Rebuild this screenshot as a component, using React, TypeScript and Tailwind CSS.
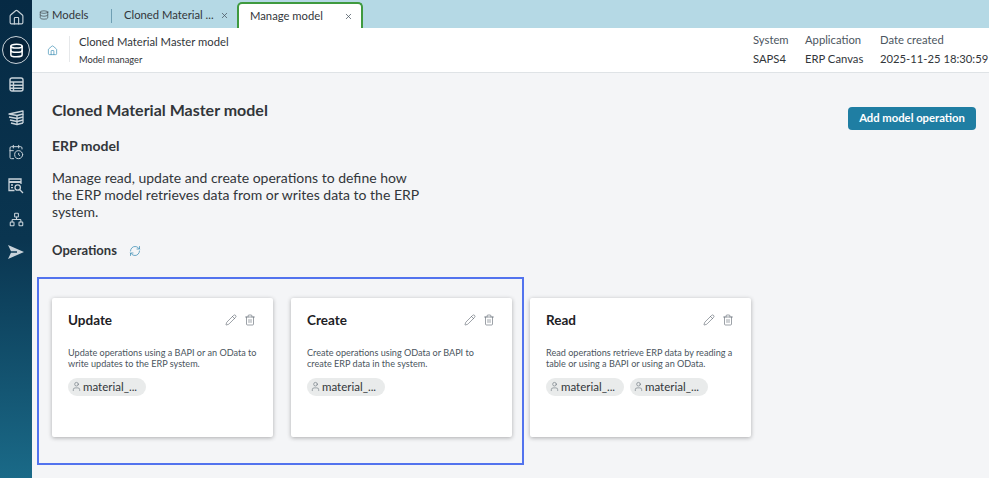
import { Home, Database, X, Pencil, Trash2, User, RefreshCw, Network, CalendarClock } from "lucide-react";

function Chip() {
  return (
    <span className="flex items-center h-[18px] w-[78px] rounded-full bg-[#e9ebeb] pl-[3px] text-[11.5px] text-[#32363a]">
      <User size={11} strokeWidth={1.2} className="text-[#5c6670] mr-[1px] shrink-0" />
      <span>material_...</span>
    </span>
  );
}

function Card({ title, lines, chips }: { title: string; lines: string[]; chips: number }) {
  return (
    <div className="w-[221px] h-[139px] shrink-0 bg-white rounded-[2px] shadow-[0_1px_4px_rgba(0,0,0,0.3)] pl-4 pr-[17px] pt-[12px]">
      <div className="flex items-center justify-between h-[20px]">
        <span className="text-[13.5px] font-bold text-[#1d2125]">{title}</span>
        <span className="flex items-center gap-[7px] text-[#4b5560]">
          <Pencil size={12} strokeWidth={1.1} />
          <Trash2 size={12} strokeWidth={1.1} />
        </span>
      </div>
      <div className="mt-[17px] text-[9.1px] leading-[11.5px] text-[#4b5560] whitespace-nowrap">
        {lines.map((l) => (
          <div key={l}>{l}</div>
        ))}
      </div>
      <div className="flex gap-[6px] mt-[8px]">
        {Array.from({ length: chips }).map((_, i) => (
          <Chip key={i} />
        ))}
      </div>
    </div>
  );
}

function RailIcons() {
  return (
    <div className="flex flex-col items-center text-[#c9d3da]">
      <div className="h-[36px] flex items-center justify-center -mt-[1px]">
        <Home size={17} strokeWidth={1.6} />
      </div>
      <div className="w-[28px] h-[28px] rounded-full border border-[#c9d3da] flex items-center justify-center bg-[#06233a] text-white mt-[1px]">
        <Database size={15} strokeWidth={2.4} />
      </div>
      <div className="flex flex-col items-center gap-[18px] mt-[13px]">
        <svg width="15" height="15" viewBox="0 0 15 15" fill="none" stroke="currentColor" strokeWidth="1.4">
          <rect x="1" y="1" width="13" height="13" rx="2" />
          <path d="M1 5h13M1 8.2h13M1 11.2h13M4.5 5v9" />
        </svg>
        <svg width="17" height="16" viewBox="0 0 17 16" fill="none" stroke="currentColor" strokeWidth="1.3" strokeLinejoin="round">
          <path d="M1 4 L15 1 V4 L9 5.5 L1 4 Z" />
          <path d="M1 7 L9 8.5 L15 7 M2 10 L9 11.5 L15 10 M3 13 L9 14.5 L15 13" />
          <path d="M9 5.5 V14.5 M15 4 V13" />
        </svg>
        <CalendarClock size={16} strokeWidth={1.5} />
        <svg width="16" height="16" viewBox="0 0 16 16" fill="none" stroke="currentColor" strokeWidth="1.3">
          <path d="M6.5 12.5 H1 V1 H13 V6" />
          <path d="M1 4 H13" strokeWidth="2" />
          <path d="M3 7 H5 M3 9.7 H5" />
          <circle cx="9.7" cy="9.5" r="2.7" />
          <path d="M11.6 11.5 L15 15" />
        </svg>
        <Network size={15} strokeWidth={1.7} />
        <svg width="16" height="14" viewBox="0 0 16 14" fill="currentColor">
          <path d="M0 0 L16 7 L0 14 L3 7.8 H9 V6.2 H3 Z" />
        </svg>
      </div>
    </div>
  );
}

export default function App() {
  return (
    <div className="relative flex w-[989px] h-[478px] overflow-hidden bg-[#f4f5f7] font-['Lato',sans-serif] text-[#32363a]">
      <aside className="w-[32px] shrink-0 bg-gradient-to-b from-[#062a44] via-[#0a3550] to-[#1a6a88]">
        <RailIcons />
      </aside>
      <div className="flex-1 flex flex-col min-w-0">
        <div className="h-[28px] bg-[#b5d9e5] flex items-end text-[11.25px] text-[#32363a] shrink-0">
          <div className="flex items-center h-[28px] pt-[2px] pl-[7px] w-[79px]">
            <Database size={10} strokeWidth={1.5} className="mr-[3px]" />
            <span>Models</span>
          </div>
          <div className="w-px h-[14px] bg-[#6f9fb3] mb-[5px]" />
          <div className="flex items-center h-[28px] pt-[2px] pl-[12px] w-[125px]">
            <span>Cloned Material ...</span>
            <X size={9} className="ml-[6px] text-[#4a5560]" />
          </div>
          <div className="flex items-center justify-between w-[126px] h-[26px] pl-[11px] pr-[8px] bg-white border-2 border-b-0 border-[#3f9a3f] rounded-t-[5px]">
            <span>Manage model</span>
            <X size={9} className="text-[#4a5560]" />
          </div>
        </div>
        <header className="h-[45px] shrink-0 bg-white border-b border-[#dfe3e6] flex items-center">
          <div className="w-[37px] flex justify-end pr-[11px]">
            <Home size={11} strokeWidth={1.5} className="text-[#3d8fb5]" />
          </div>
          <div className="border-l border-[#e6e8ea] h-[26px] pl-[9px] flex flex-col -mt-[2px]">
            <span className="text-[11.25px] leading-[14px] -mt-[1px] text-[#32363a]">Cloned Material Master model</span>
            <span className="text-[9.25px] leading-[12px] mt-[5px] text-[#32363a]">Model manager</span>
          </div>
          <div className="ml-auto flex gap-[17px] text-[11.25px] leading-[14px] text-[#4b5560] whitespace-nowrap -mt-[1px]">
            <div className="flex flex-col gap-[5px] w-[35px]"><span>System</span><span className="text-[#32363a]">SAPS4</span></div>
            <div className="flex flex-col gap-[5px] w-[58px]"><span>Application</span><span className="text-[#32363a]">ERP Canvas</span></div>
            <div className="flex flex-col gap-[5px] w-[109px]"><span>Date created</span><span className="text-[#32363a]">2025-11-25 18:30:59</span></div>
          </div>
        </header>
        <main className="flex-1 pl-[20px] pr-[13px] pt-[26px] relative">
          <div className="flex justify-between items-start">
            <h1 className="text-[16px] leading-[22px] font-bold text-[#32363a]">Cloned Material Master model</h1>
            <button className="h-[23px] w-[128px] mt-[8px] rounded-[4px] bg-[#1f7ea3] text-white text-[11.25px] font-bold">Add model operation</button>
          </div>
          <h2 className="mt-[7px] text-[14px] leading-[18px] font-bold text-[#32363a]">ERP model</h2>
          <p className="mt-[15px] w-[375px] text-[14px] leading-[16.75px] text-[#32363a]">
            Manage read, update and create operations to define how the ERP model retrieves data from or writes data to the ERP system.
          </p>
          <div className="mt-[20.5px] flex items-center gap-[12px] h-[20px]">
            <span className="text-[13px] font-bold text-[#32363a]">Operations</span>
            <RefreshCw size={12} strokeWidth={1.5} className="text-[#3d8fb5]" />
          </div>
          <div className="flex gap-[18px] mt-[37px]">
            <Card title="Update" lines={["Update operations using a BAPI or an OData to", "write updates to the ERP system."]} chips={1} />
            <Card title="Create" lines={["Create operations using OData or BAPI to", "create ERP data in the system."]} chips={1} />
            <Card title="Read" lines={["Read operations retrieve ERP data by reading a", "table or using a BAPI or using an OData."]} chips={2} />
          </div>
        </main>
      </div>
      <div className="absolute left-[37px] top-[277px] w-[487px] h-[188px] border-2 border-[#5273ee] pointer-events-none" />
    </div>
  );
}
